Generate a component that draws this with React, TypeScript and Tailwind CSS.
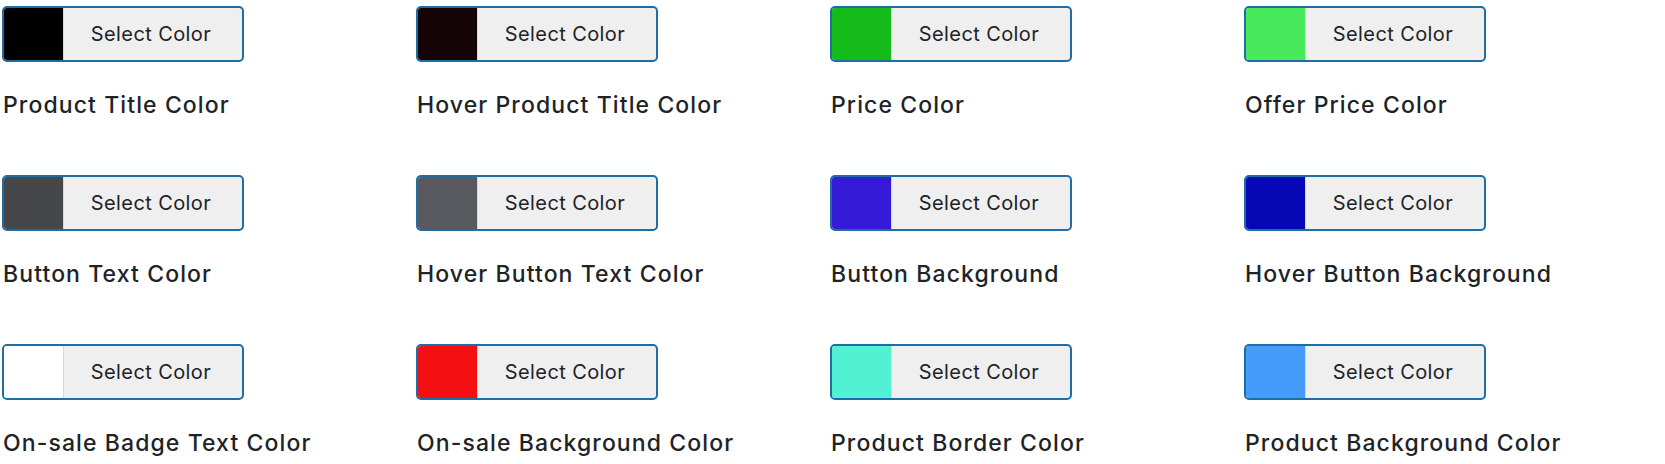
import React from "react";

const items: { label: string; color: string }[] = [
  { label: "Product Title Color", color: "#000000" },
  { label: "Hover Product Title Color", color: "#140406" },
  { label: "Price Color", color: "#14bb19" },
  { label: "Offer Price Color", color: "#48ea5c" },
  { label: "Button Text Color", color: "#45474a" },
  { label: "Hover Button Text Color", color: "#58585f" },
  { label: "Button Background", color: "#351ad7" },
  { label: "Hover Button Background", color: "#0508b4" },
  { label: "On-sale Badge Text Color", color: "#ffffff" },
  { label: "On-sale Background Color", color: "#f30f12" },
  { label: "Product Border Color", color: "#52f1d4" },
  { label: "Product Background Color", color: "#469cfb" },
];

export default function App() {
  return (
    <div
      className="w-[1665px] h-[464px] bg-white overflow-hidden pl-[2px] pt-[6px]"
      style={{ fontFamily: "Inter, 'Noto Sans', sans-serif" }}
    >
      <div className="grid grid-cols-[414px_414px_414px_414px] gap-y-[55px]">
        {items.map((it) => (
          <div key={it.label} className="flex flex-col">
            <button className="flex h-[56px] w-[242px] overflow-hidden rounded-[5px] border-2 border-[#1c6ea4] bg-[#efefef] p-0">
              <span className="h-full w-[60px] shrink-0 border-r border-[#d8d8d8]" style={{ backgroundColor: it.color }} />
              <span className="flex flex-1 items-center justify-center pr-[4px] text-[20px] tracking-[0.4px] text-[#1d2327]">
                Select Color
              </span>
            </button>
            <div className="mt-[28px] h-[30px] whitespace-nowrap pl-[1px] text-[23px] font-medium leading-[30px] tracking-[1.1px] text-[#1d2327]">
              {it.label}
            </div>
          </div>
        ))}
      </div>
    </div>
  );
}
